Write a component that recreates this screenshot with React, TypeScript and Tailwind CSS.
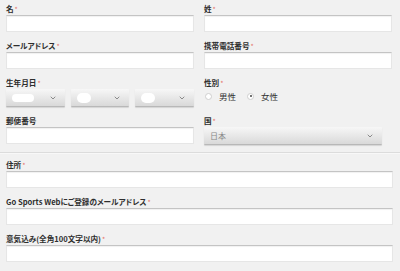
import { ChevronDown } from 'lucide-react'

const font = "[font-family:'Noto_Sans_CJK_JP','Liberation_Sans',sans-serif]"

function Label({ text, required }: { text: string; required?: boolean }) {
  return (
    <div className={`h-[12px] text-[7.6px] leading-[12px] font-bold text-[#2e2e2e] [font-feature-settings:'palt'] ${font}`}>
      {text}
      {required && <span className="ml-[1px] align-top text-[7px] font-normal text-[#e57368]">*</span>}
    </div>
  )
}

function TextInput() {
  return (
    <div className="h-[17px] w-full bg-white border border-[#e6e6e6] border-t-[#c4c4c4] shadow-[inset_0_1px_1px_rgba(0,0,0,0.06)]" />
  )
}

function Select({ value, blob }: { value?: string; blob?: string }) {
  return (
    <div className="flex h-[18px] w-full items-center justify-between rounded-[1px] border-b border-[#b8b8b8] bg-gradient-to-b from-[#f7f7f7] to-[#d9d9d9] pl-[6px] pr-[8px] shadow-[0_1px_1px_rgba(0,0,0,0.12)]">
      {value ? (
        <span className={`text-[8px] text-[#888] ${font}`}>{value}</span>
      ) : (
        <span className={`block h-[8px] bg-white rounded-full ${blob}`} />
      )}
      <ChevronDown size={8} strokeWidth={2.5} className="text-[#777]" />
    </div>
  )
}

function Radio({ checked, label }: { checked?: boolean; label: string }) {
  return (
    <div className="flex items-center gap-[7px]">
      <span className="flex h-[7px] w-[7px] items-center justify-center rounded-full border border-[#cfcfcf] bg-white">
        {checked && <span className="h-[2px] w-[2px] rounded-full bg-[#444]" />}
      </span>
      <span className={`text-[8.5px] text-[#333] ${font}`}>{label}</span>
    </div>
  )
}

export default function App() {
  return (
    <div className="h-[271px] w-[400px] overflow-hidden bg-[#f1f1f1]">
      <div className="grid grid-cols-[188px_188px] gap-x-[10px] gap-y-[8px] pl-[6px] pt-[3px]">
        <div>
          <Label text="名" required />
          <TextInput />
        </div>
        <div>
          <Label text="姓" required />
          <TextInput />
        </div>
        <div>
          <Label text="メールアドレス" required />
          <TextInput />
        </div>
        <div>
          <Label text="携帯電話番号" required />
          <TextInput />
        </div>
        <div>
          <Label text="生年月日" required />
          <div className="flex gap-[6px]">
            <Select blob="w-[22px] rounded-[3px]" />
            <Select blob="w-[14px] h-[10px]" />
            <Select blob="w-[14px] h-[10px]" />
          </div>
        </div>
        <div>
          <Label text="性別" required />
          <div className="flex h-[14px] items-center gap-[11px] pl-[1px]">
            <Radio label="男性" />
            <Radio checked label="女性" />
          </div>
        </div>
        <div>
          <Label text="郵便番号" />
          <TextInput />
        </div>
        <div>
          <Label text="国" required />
          <div className="w-[178px]">
            <Select value="日本" />
          </div>
        </div>
      </div>

      <div className="mt-[7px] h-[2px] border-t border-[#dcdcdc] bg-[#f8f8f8]" />

      <div className="flex w-[393px] flex-col gap-[8px] pl-[6px] pt-[5px]">
        <div>
          <Label text="住所" required />
          <TextInput />
        </div>
        <div>
          <Label text="Go Sports Webにご登録のメールアドレス" required />
          <TextInput />
        </div>
        <div>
          <Label text="意気込み(全角100文字以内)" required />
          <TextInput />
        </div>
      </div>
    </div>
  )
}
